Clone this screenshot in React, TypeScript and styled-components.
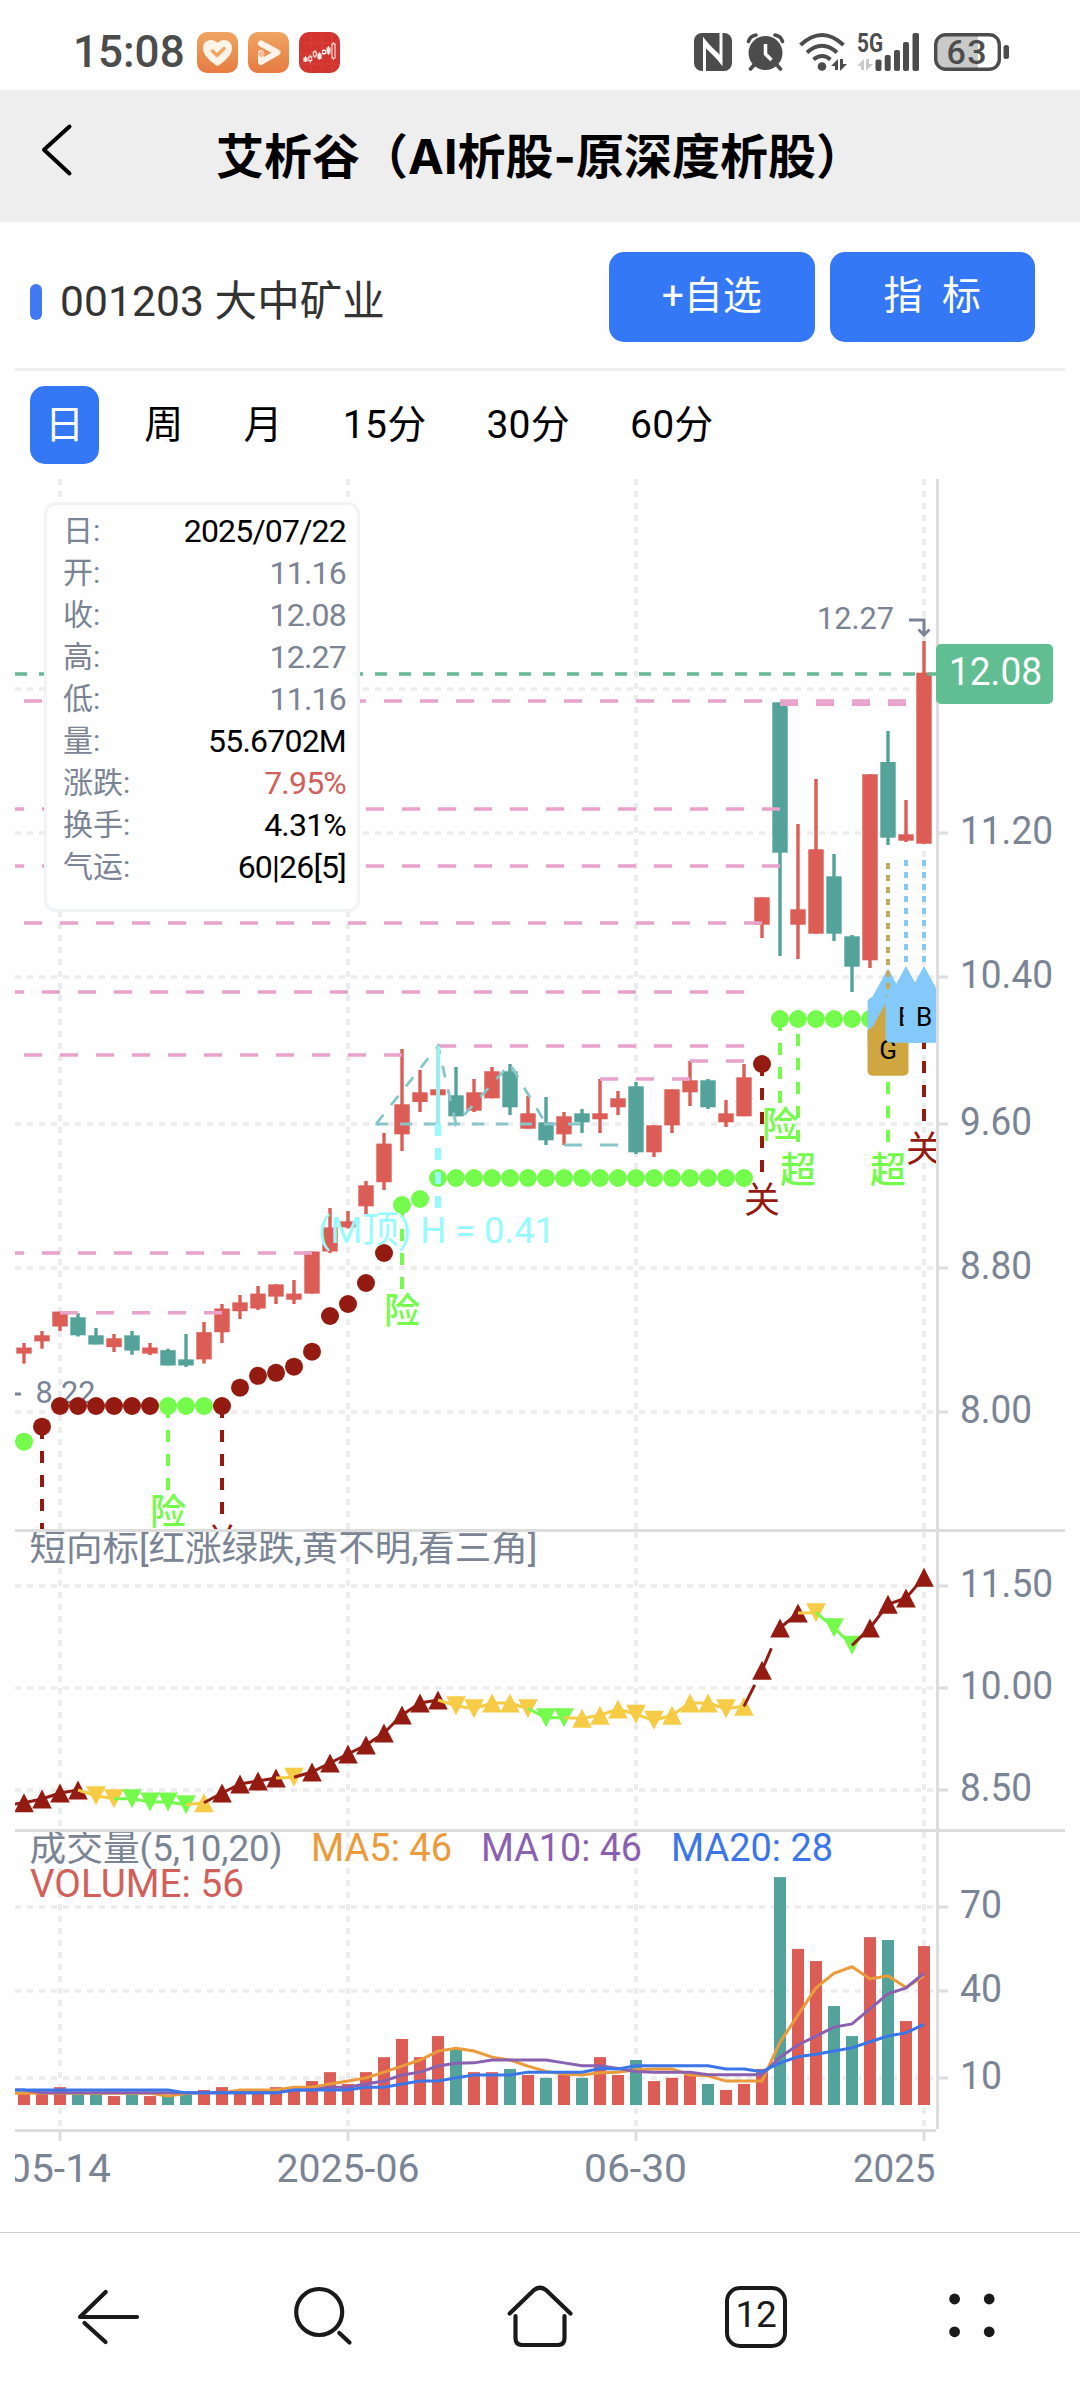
import React from "react";
import styled, { createGlobalStyle } from "styled-components";

const SANS = `Roboto, "Noto Sans CJK SC", sans-serif`;
const RED = "#db5d55";
const TEAL = "#54a39a";
const DEEP = "#931b12";
const LIME = "#75fb4c";
const AMBER = "#f6cc46";
const SLATE = "#7b8494";
const PINK = "#e9a3cb";
const AXIS = "#dddddd";
const GRID = "#ececec";
const BLUE = "#3478f6";

const GlobalStyle = createGlobalStyle`
  * { box-sizing: border-box; }
  body { margin: 0; background: #fefefe; font-family: ${SANS}; }
`;

const Page = styled.div`
  width: 1080px;
  height: 2400px;
  display: flex;
  flex-direction: column;
  background: #fefefe;
  overflow: hidden;
`;

const StatusBar = styled.div`
  height: 90px;
  flex: none;
  padding: 14px 71px 0 73px;
  display: flex;
  justify-content: space-between;
  align-items: center;
  color: #4c4c4c;
`;

const StatusGroup = styled.div<{ $gap: number }>`
  display: flex;
  align-items: center;
  gap: ${(p) => p.$gap}px;
`;

const Clock = styled.span`
  font-size: 44px;
  font-weight: 500;
  line-height: 44px;
  width: 114px;
`;

const Icon = styled.svg`
  display: block;
  flex: none;
  overflow: visible;
`;

const Header = styled.header`
  height: 132px;
  flex: none;
  background: #eeeeee;
  display: grid;
  grid-template-columns: 110px 1fr 110px;
  align-items: center;
`;

const Title = styled.h1`
  margin: 0;
  padding-top: 1px;
  font-family: Inter, "Noto Sans CJK SC", sans-serif;
  font-size: 48px;
  font-weight: 700;
  line-height: 60px;
  text-align: center;
  white-space: nowrap;
  color: #000;
`;

const StockRow = styled.section`
  height: 149px;
  flex: none;
  margin: 0 15px;
  padding: 30px 30px 0 15px;
  border-bottom: 3px solid #eeeeee;
  display: flex;
  align-items: flex-start;
  gap: 15px;
`;

const StockName = styled.div`
  flex: 1;
  display: flex;
  align-items: center;
  gap: 18px;
  height: 90px;
  padding-top: 10px;
  color: #333;
  white-space: pre;
`;

const StockText = styled.span`
  padding-bottom: 1px;
  font-size: 42.5px;
  line-height: 50px;
  letter-spacing: 0.1px;
`;

const Marker = styled.span`
  width: 12px;
  height: 36px;
  border-radius: 6px;
  background: #4378f5;
`;

const ActionButton = styled.button`
  width: 205.5px;
  height: 90px;
  padding: 0 0 10px;
  border: 0;
  border-radius: 15px;
  background: ${BLUE};
  color: #fff;
  font-family: ${SANS};
  font-size: 39px;
  white-space: pre;
`;

const Tabs = styled.nav`
  height: 102px;
  flex: none;
  padding: 15px 30px 0;
  display: flex;
  align-items: flex-start;
  gap: 30px;
`;

const Tab = styled.div<{ $active?: boolean }>`
  height: 78px;
  padding: 0 15px 9px;
  display: flex;
  align-items: center;
  border-radius: 15px;
  font-size: 39px;
  letter-spacing: 0.25px;
  background: ${(p) => (p.$active ? BLUE : "transparent")};
  color: ${(p) => (p.$active ? "#fff" : "#000")};
`;

const ChartArea = styled.section`
  position: relative;
  height: 1759px;
  flex: none;
`;

const ChartSvg = styled.svg`
  display: block;
  font-family: ${SANS};
`;

const Tooltip = styled.dl`
  position: absolute;
  left: 44px;
  top: 29px;
  width: 316px;
  height: 410px;
  margin: 0;
  padding: 5px 11px 0 16px;
  border: 3px solid #f2f3f5;
  border-radius: 12px;
  background: #fefefe;
`;

const TipRow = styled.div`
  height: 42px;
  display: flex;
  align-items: center;
  justify-content: space-between;
`;

const TipLabel = styled.dt`
  font-size: 30px;
  line-height: 42px;
  color: ${SLATE};
`;

const TipValue = styled.dd<{ $color: string }>`
  margin: 0;
  font-size: 32px;
  line-height: 42px;
  letter-spacing: -0.8px;
  color: ${(p) => p.$color};
`;

const NavBar = styled.footer`
  height: 168px;
  flex: none;
  border-top: 1px solid #cccccc;
  display: grid;
  grid-template-columns: repeat(5, 1fr);
  justify-items: center;
  align-items: center;
`;

const TabCount = styled.div`
  width: 62px;
  height: 62px;
  border: 4px solid #1a1a1a;
  border-radius: 15px;
  display: flex;
  align-items: center;
  justify-content: center;
  padding: 0 0 5px;
  font-size: 37px;
  letter-spacing: -0.4px;
  color: #1a1a1a;
`;

/* [body top, body bottom, wick top, wick bottom, rising] */
type Candle = [number, number, number, number, 0 | 1];
const candles: Candle[] = [
  [1347.5, 1353.6, 1343, 1363.6, 1],
  [1335.3, 1341.4, 1331, 1348.7, 1],
  [1311.6, 1326.5, 1311.6, 1331, 1],
  [1317.3, 1335.3, 1313, 1336.5, 0],
  [1335.3, 1344.5, 1328, 1344.5, 0],
  [1338.3, 1347.1, 1334, 1352, 1],
  [1335.3, 1350.6, 1331, 1354.8, 0],
  [1347.5, 1353.6, 1343, 1355, 1],
  [1350.2, 1365.5, 1348.7, 1365.5, 0],
  [1359.4, 1365.5, 1334, 1367, 0],
  [1332.2, 1359.4, 1322, 1363.6, 1],
  [1308.5, 1332.2, 1304, 1343, 1],
  [1302.4, 1311.2, 1295, 1319, 1],
  [1293.6, 1308.5, 1286, 1310, 1],
  [1284.4, 1296.6, 1284.4, 1304, 1],
  [1293.6, 1299.7, 1280, 1304, 1],
  [1251.5, 1293.6, 1251.5, 1293.6, 1],
  [1227.4, 1251.5, 1208, 1253, 1],
  [1221.3, 1227.4, 1211, 1228.5, 1],
  [1185.3, 1206.3, 1181, 1214, 1],
  [1143.6, 1182.2, 1133, 1190, 1],
  [1104.3, 1134.3, 1049, 1151, 1],
  [1092.3, 1102, 1070, 1112, 1],
  [1089.3, 1095.3, 1046, 1095.3, 1],
  [1095.3, 1116.3, 1067, 1116.3, 0],
  [1092.3, 1110.7, 1079, 1112, 1],
  [1071.3, 1098.3, 1067, 1098.3, 1],
  [1071.3, 1107.3, 1064, 1115, 0],
  [1113.3, 1128.7, 1096, 1128.7, 1],
  [1122.3, 1140.3, 1097, 1145, 0],
  [1116.3, 1134.3, 1112, 1145, 1],
  [1113.3, 1122.3, 1109, 1133, 0],
  [1113.3, 1119.3, 1079, 1133, 1],
  [1098.3, 1107.3, 1091, 1115, 1],
  [1086.3, 1152.3, 1082, 1154, 0],
  [1125.3, 1152.3, 1125.3, 1157, 1],
  [1089.3, 1125.3, 1089.3, 1133, 1],
  [1080.3, 1092.3, 1061, 1106, 1],
  [1080.3, 1107.3, 1079, 1109, 0],
  [1113.3, 1122.3, 1100, 1127, 1],
  [1077.3, 1116.3, 1064, 1116.3, 1],
  [897.3, 924.7, 897.3, 938, 1],
  [702.3, 852.7, 702.3, 956, 0],
  [909.3, 924.7, 824, 959, 1],
  [849.3, 933.7, 779, 933.7, 1],
  [876.3, 933.7, 854, 941, 0],
  [936.3, 966.7, 935, 992, 0],
  [774.3, 960.3, 774.3, 968, 1],
  [762, 837.7, 731, 845, 0],
  [834.3, 840.7, 800, 842, 1],
  [672.7, 843.7, 641, 843.7, 1],
];

const xAt = (i: number) => 24 + 18 * i;
const fill = (n: number, v: number) => Array<number>(n).fill(v);

const sarY = [
  1441.7, 1426.7, ...fill(10, 1406), 1387.7, 1375.8, 1372.8, 1366.7, 1351.7, 1316, 1304, 1283, 1253,
  1205, 1199, ...fill(18, 1178), 1064, ...fill(8, 1019), 1013,
];
const sarRed = new Set([1, 2, 3, 4, 5, 6, 7, 11, 12, 13, 14, 15, 16, 17, 18, 19, 20, 41, 50]);

/* u = up, d = down; r/y/g = red, yellow, green */
const trend: [number, string][] = [
  [1802.7, "ur"], [1799, "ur"], [1793, "ur"], [1790, "ur"], [1795.7, "dy"], [1798.7, "dy"],
  [1798.7, "dg"], [1802, "dg"], [1802, "dg"], [1804.7, "dg"], [1802.7, "uy"], [1793, "ur"],
  [1784, "ur"], [1781, "ur"], [1778, "ur"], [1777.3, "dy"], [1772, "ur"], [1763, "ur"],
  [1754, "ur"], [1745, "ur"], [1733, "ur"], [1715, "ur"], [1703, "ur"], [1700, "ur"],
  [1705.7, "dy"], [1708.7, "dy"], [1703, "uy"], [1703, "uy"], [1708.7, "dy"], [1717.7, "dg"],
  [1717.7, "dg"], [1718.3, "uy"], [1715.3, "uy"], [1709, "uy"], [1714.3, "dy"], [1720.3, "dy"],
  [1715.3, "uy"], [1703, "uy"], [1703, "uy"], [1708.7, "dy"], [1706.3, "uy"], [1670.3, "ur"],
  [1628, "ur"], [1613, "ur"], [1612.7, "dy"], [1627.7, "dg"], [1645.3, "dg"], [1628, "ur"],
  [1604.3, "ur"], [1598, "ur"], [1577.3, "ur"],
];
const trendColor: Record<string, string> = { r: DEEP, y: AMBER, g: LIME };

/* Volume panel values, in units of 1/2.8 px below y = 1840 */
const volY = (v: number) => 1840 + v / 2.8;
const volumes = [
  708, 708, 692, 712, 712, 717, 712, 717, 717, 712, 700, 692, 708, 708, 692, 700, 675, 650, 683,
  650, 608, 557, 608, 549, 587, 650, 650, 641, 658, 666, 658, 666, 608, 658, 616, 675, 666, 658,
  683, 700, 683, 641, 104, 305, 339, 465, 549, 272, 280, 507, 297,
];
const ma5 = [
  ...fill(8, 709), 717, 710, 708, 708, 700, 700, 700, 692, 692, 683, 675, 666, 650, 633, 616, 591,
  583, 591, 608, 616, 633, 648, 655, 658, 652, 650, 643, 641, 641, 658, 660, 675, 675, 675, 566,
  490, 414, 373, 355, 389, 380, 413, 381,
];
const ma10 = [
  700, ...fill(14, 708), 700, 700, 692, 692, 683, 675, 658, 650, 633, 625, 624, 616, 616, 616, 616,
  624, 632, 632, 640, 648, 650, 650, 650, 657, 657, 657, 657, 608, 574, 549, 524, 515, 473, 431,
  414, 373,
];
const ma20 = [
  ...fill(9, 700), ...fill(6, 708), 700, 700, 700, 700, 692, 692, 683, 675, 675, 666, 658, 658, 658,
  650, 650, 650, 650, 640, 641, 632, 632, 632, 632, 632, 641, 641, 649, 624, 607, 600, 591, 582,
  565, 549, 540, 516,
];
const averages: [number[], string][] = [
  [ma5, "#ec9b3b"],
  [ma10, "#8a60b0"],
  [ma20, "#3a76e8"],
];

/* Resistance levels: [y, x start, x end] */
const levels = [
  [701, 24, 906], [704.3, 780, 906], [809, 6, 780], [866, 6, 780], [923, 24, 762], [992, 6, 744],
  [1055, 24, 402], [1046, 438, 744], [1061, 690, 744], [1079, 600, 690], [1253, 6, 312],
  [1312.7, 60, 222],
];

const priceTicks: [number, string][] = [
  [833, "11.20"], [977, "10.40"], [1124, "9.60"], [1268, "8.80"], [1412, "8.00"],
];
const trendTicks: [number, string][] = [[1586, "11.50"], [1688, "10.00"], [1790, "8.50"]];
const volTicks: [number, string][] = [[1907, "70"], [1991, "40"], [2078, "10"]];
const allTicks = [...priceTicks, ...trendTicks, ...volTicks];
const dateXs = [60, 348, 636, 924];

/* Signal marks: [x, line start, line length, label, colour] */
const signals: [number, number, number, string, string][] = [
  [42, 1427, 108, "", DEEP],
  [168, 1406, 84, "险", LIME],
  [222, 1406, 108, "关", DEEP],
  [402, 1205, 84, "险", LIME],
  [762, 1064, 108, "关", DEEP],
  [780, 1019, 84, "险", LIME],
  [798, 1010, 132, "超", LIME],
  [888, 1010, 132, "超", LIME],
  [924, 1013, 108, "关", DEEP],
];

const tips: [string, string, string][] = [
  ["日:", "2025/07/22", "#000"],
  ["开:", "11.16", SLATE],
  ["收:", "12.08", SLATE],
  ["高:", "12.27", SLATE],
  ["低:", "11.16", SLATE],
  ["量:", "55.6702M", "#000"],
  ["涨跌:", "7.95%", "#d0605a"],
  ["换手:", "4.31%", "#000"],
  ["气运:", "60|26[5]", "#000"],
];

interface LabelProps {
  x: number;
  y: number;
  w?: number;
  size?: number;
  weight?: number;
  color?: string;
  anchor?: "start" | "middle" | "end";
  children: string;
}
const Label = ({ x, y, w, size = 38, weight = 400, color = SLATE, anchor = "start", children }: LabelProps) => (
  <text
    x={x}
    y={y}
    fontSize={size}
    fontWeight={weight}
    fill={color}
    textAnchor={anchor}
    textLength={w}
    lengthAdjust={w ? "spacingAndGlyphs" : undefined}
  >
    {children}
  </text>
);

const Flag = ({ x, y, color, text }: { x: number; y: number; color: string; text: string }) => (
  <g>
    <path d={`M${x} ${y}L${x + 17} ${y + 31}H${x - 17}Z`} fill={color} />
    <rect x={x - 20.5} y={y + 28.7} width={41} height={48} rx={5} fill={color} />
    <Label x={x} y={y + 59.5} size={26} color="#000" anchor="middle">
      {text}
    </Label>
  </g>
);

const PriceFlags = () => (
  <g>
    <Flag x={888} y={968.5} color="#83c9f9" text="" />
    <path d="M888 863V997" stroke="#c3aa5c" strokeWidth={4} strokeDasharray="6 6" />
    <path d="M906 860V966M924 860V966" stroke="#86caf3" strokeWidth={4} strokeDasharray="6 6" />
    <Flag x={888} y={999} color="#cfa640" text="G" />
    <Flag x={906} y={966} color="#83c9f9" text="B" />
    <Flag x={924} y={966} color="#83c9f9" text="B" />
  </g>
);

const Grid = () => (
  <g stroke={GRID} strokeWidth={3.4} strokeDasharray="6 6" fill="none">
    {[689, ...allTicks.map((t) => t[0])].map((y) => (
      <path key={y} d={`M15 ${y}H936`} />
    ))}
    {dateXs.map((x) => (
      <path key={x} strokeWidth={4} d={`M${x} 479V1529M${x} 1532V1829M${x} 1832V2129`} />
    ))}
  </g>
);

const PricePanel = () => (
  <g clipPath="url(#pricePanel)">
    <Label x={35.5} y={1403} w={60} size={31}>8.22</Label>
    <path d="M15 1394H21" stroke={SLATE} strokeWidth={3} />
    {candles.map(([top, bottom, high, low, up], i) => (
      <g key={i} fill={up ? RED : TEAL}>
        <rect x={xAt(i) - 1.7} y={high} width={3.4} height={low - high} />
        <rect x={xAt(i) - 7.7} y={top} width={15.4} height={bottom - top} />
      </g>
    ))}
    <path d="M15 674H936" stroke="#65b891" strokeWidth={3.4} strokeDasharray="12 12" />
    {levels.map(([y, from, to]) => (
      <path key={y} d={`M${from} ${y}H${to}`} stroke={PINK} strokeWidth={3.4} strokeDasharray="18 18" />
    ))}
    {sarY.map((y, i) => (
      <circle key={i} cx={xAt(i)} cy={y} r={9} fill={sarRed.has(i) ? DEEP : LIME} />
    ))}
    <g fill="none" stroke="#88c6ca" strokeWidth={3.2}>
      <path d="M376 1124L438 1046L456 1124L510 1064L546 1124" strokeWidth={2.8} strokeDasharray="12 12" />
      <path d="M376 1124H582" strokeDasharray="12 12" />
      <path d="M564 1145H618" strokeDasharray="18 18" />
    </g>
    <path d="M438 1046V1124" stroke="#9aefee" strokeWidth={4} />
    <path d="M438 1124V1208" stroke="#97fbfd" strokeWidth={6} strokeDasharray="12 12" />
    {signals.map(([x, y, len, text, color]) => (
      <g key={x}>
        <path d={`M${x} ${y}V${y + len}`} stroke={color} strokeWidth={4} strokeDasharray="12 12" />
        <Label
          x={x}
          y={y + len + (text === "险" ? 35 : 41)}
          size={36}
          weight={color === LIME ? 500 : 400}
          color={color}
          anchor="middle"
        >
          {text}
        </Label>
      </g>
    ))}
    <Label x={318} y={1243} w={237} size={37} color="#97fbfd">(M顶) H = 0.41</Label>
    <PriceFlags />
    <Label x={817} y={629} w={77} size={32}>12.27</Label>
    <path d="M909 620H924V634M918.5 629.5L924 635L929.5 629.5" fill="none" stroke={SLATE} strokeWidth={3} />
  </g>
);

const TrendPanel = () => (
  <g clipPath="url(#trendPanel)">
    <path d="M15 1804L24 1802.7" stroke={DEEP} strokeWidth={3} />
    {trend.map(([y, kind], i) => {
      const x = xAt(i);
      const s = kind[0] === "u" ? 9.5 : -9.5;
      const color = trendColor[kind[1]];
      return (
        <g key={i}>
          <path d={`M${x} ${y - s}L${x + 9.8} ${y + s}H${x - 9.8}Z`} fill={color} />
          {i > 0 && (
            <path
              d={`M${xAt(i - 1)} ${trend[i - 1][0]}L${x} ${y}`}
              stroke={color}
              strokeWidth={3}
              strokeDasharray="24 24"
            />
          )}
        </g>
      );
    })}
    <Label x={29.5} y={1561} w={508} size={36}>短向标[红涨绿跌,黄不明,看三角]</Label>
  </g>
);

const VolumePanel = () => (
  <g>
    {volumes.map((v, i) => (
      <rect
        key={i}
        x={xAt(i) - 6}
        y={volY(v)}
        width={12}
        height={2105 - volY(v)}
        fill={candles[i][4] ? RED : TEAL}
      />
    ))}
    {averages.map(([values, color]) => (
      <polyline
        key={color}
        points={`15,${volY(values[0])} ${values.map((v, i) => `${xAt(i)},${volY(v)}`).join(" ")}`}
        fill="none"
        stroke={color}
        strokeWidth={3}
      />
    ))}
    <Label x={29.5} y={1861} w={253} size={36}>成交量(5,10,20)</Label>
    <Label x={311} y={1861} w={141} color="#ec9b3b">MA5: 46</Label>
    <Label x={481} y={1861} w={161} color="#8a60b0">MA10: 46</Label>
    <Label x={671} y={1861} w={162} color="#3a76e8">MA20: 28</Label>
    <Label x={30} y={1897} w={214} color="#d2605a">VOLUME: 56</Label>
  </g>
);

const Axes = () => (
  <g>
    <g stroke={AXIS} strokeWidth={3} fill="none">
      <path d="M15 1530.5H1065M15 1830.5H1065M15 2130.5H936M937.5 479V2129" />
      {allTicks.map(([y]) => (
        <path key={y} d={`M939 ${y}H948`} />
      ))}
      {dateXs.map((x) => (
        <path key={x} d={`M${x} 2132V2141`} />
      ))}
    </g>
    {allTicks.map(([y, text]) => (
      <Label key={y} x={960} y={y + 11} w={text.length === 5 ? 93 : text.length === 4 ? 72 : 42}>
        {text}
      </Label>
    ))}
    <g clipPath="url(#dateAxis)">
      <Label x={8} y={2182} w={103}>05-14</Label>
      <Label x={276.5} y={2182} w={143}>2025-06</Label>
      <Label x={584} y={2182} w={103}>06-30</Label>
      <Label x={853} y={2182} w={82.5}>2025</Label>
    </g>
    <rect x={936} y={644} width={117} height={60} rx={5} fill="#61bd92" />
    <Label x={949} y={685} w={93} color="#fff">12.08</Label>
  </g>
);

const Chart = () => (
  <ChartSvg width={1080} height={1759} viewBox="0 473 1080 1759">
    <defs>
      <clipPath id="pricePanel"><rect x={15} y={473} width={921} height={1056} /></clipPath>
      <clipPath id="trendPanel"><rect x={15} y={1532} width={921} height={297} /></clipPath>
      <clipPath id="dateAxis"><rect x={15} y={2132} width={921} height={80} /></clipPath>
    </defs>
    <Grid />
    <PricePanel />
    <TrendPanel />
    <VolumePanel />
    <Axes />
  </ChartSvg>
);

const AppBadges = () => (
  <>
    <Icon width={41} height={41} viewBox="0 0 41 41">
      <defs>
        <linearGradient id="orange" x1="0" y1="0" x2="0" y2="1">
          <stop offset="0" stopColor="#f0a562" />
          <stop offset="1" stopColor="#e67b42" />
        </linearGradient>
      </defs>
      <rect width={41} height={41} rx={10} fill="url(#orange)" />
      <path d="M20.5 34C14 30 6 23.500 6 16C6 7.500 16 5.500 20.500 11C25 5.500 35 7.500 35 16C35 23.500 27 30 20.500 34Z" fill="#fff4e8" />
      <path d="M15.500 19L20 23.500L27 16.500" fill="none" stroke="#f0a562" strokeWidth={3.500} strokeLinecap="round" strokeLinejoin="round" />
    </Icon>
    <Icon width={41} height={41} viewBox="0 0 41 41">
      <rect width={41} height={41} rx={10} fill="url(#orange)" />
      <path d="M13 11.500L29.500 20.500L13 30V21" fill="none" stroke="#fff3ea" strokeWidth={6} strokeLinecap="round" strokeLinejoin="round" />
      <circle cx={13.500} cy={22} r={3} fill="#f6bd90" />
    </Icon>
    <Icon width={41} height={41} viewBox="0 0 41 41">
      <rect width={41} height={41} rx={10} fill="#d2352f" />
      <path d="M0 11H41M0 22H41M0 32H41M12 0V41M23 0V41M33 0V41" stroke="#dc4a43" strokeWidth={0.6} />
      <g fill="none" stroke="#ffe9e6" strokeWidth={1.1}>
        <rect x={5} y={26} width={3} height={3} fill="#ffe9e6" />
        <path d="M6.500 24V30M11.200 23V31M15.800 18V26M20.500 20V28M25 17V23M29.500 14V23M34.500 10V28" />
        <rect x={9.700} y={25} width={3} height={3.500} fill="#d2352f" />
        <rect x={14.300} y={20} width={3} height={4} fill="#d2352f" />
        <rect x={19} y={22} width={3} height={4.500} fill="#ffe9e6" />
        <rect x={23.500} y={18.500} width={3} height={3} fill="#d2352f" />
        <rect x={28} y={16} width={3} height={5} fill="#ffe9e6" />
        <rect x={33} y={12} width={3} height={14} fill="#d2352f" />
      </g>
    </Icon>
  </>
);

const StatusIcons = () => (
  <>
    <Icon width={38} height={38} viewBox="0 0 38 38">
      <rect width={38} height={38} rx={8} fill="#4c4c4c" />
      <path d="M10.500 38V8L27 29V0" fill="none" stroke="#fefefe" strokeWidth={3} />
      <path d="M10.500 7L27 23V30L10.500 14Z" fill="#fefefe" />
    </Icon>
    <Icon width={37} height={38} viewBox="0 0 37 38">
      <circle cx={18.500} cy={20} r={17} fill="#4c4c4c" />
      <path d="M7 32L3.500 36M30 32L33.500 36M1.500 8.500Q3 3 9 2M35.500 8.500Q34 3 28 2" fill="none" stroke="#4c4c4c" strokeWidth={3.600} strokeLinecap="round" />
      <path d="M18.500 11V21L24.500 27" fill="none" stroke="#fefefe" strokeWidth={3.500} />
    </Icon>
    <Icon width={43} height={38} viewBox="0 0 43 38">
      <g fill="none" stroke="#4c4c4c" strokeWidth={4}>
        <path d="M1.500 12Q23 -8 44.500 12" />
        <path d="M8 19.500Q23 6 38 19.500" />
        <path d="M14.500 26.500Q23 19.500 31.500 26.500" />
      </g>
      <circle cx={23} cy={33.500} r={4.300} fill="#4c4c4c" />
      <path d="M39 37V26L32 33H36V37ZM41 26V38L48 31H44V26Z" fill="#4c4c4c" />
    </Icon>
    <Icon width={62} height={38} viewBox="0 0 62 38">
      <text x={0} y={18.500} fontFamily={SANS} fontSize={25} fontWeight={700} fill="#4c4c4c" textLength={26} lengthAdjust="spacingAndGlyphs">5G</text>
      <path d="M7 37V26L0 33H4V37ZM9 26V38L16 31H12V26Z" fill="#c9c9c9" />
      <g fill="#4c4c4c">
        <rect x={18.500} y={26.500} width={6} height={11.500} rx={2} />
        <rect x={27.700} y={22} width={6} height={16} rx={2} />
        <rect x={37} y={17} width={6} height={21} rx={2} />
        <rect x={46} y={9} width={6} height={29} rx={2} />
        <rect x={55.500} y={0} width={6.500} height={38} rx={2} />
      </g>
    </Icon>
    <Icon width={75} height={38} viewBox="0 0 75 38">
      <path d="M12 2H44V36H12Q2 36 2 26V12Q2 2 12 2Z" fill="#c9c9c9" />
      <rect x={1.700} y={1.700} width={63.600} height={34.600} rx={10} fill="none" stroke="#4c4c4c" strokeWidth={3.400} />
      <rect x={69.500} y={12} width={5.500} height={14} rx={2.500} fill="#4c4c4c" />
      <text x={12.500} y={31} fontFamily={SANS} fontSize={34} fontWeight={500} fill="#4c4c4c" textLength={40}>63</text>
    </Icon>
  </>
);

const strokeProps = {
  fill: "none",
  stroke: "#1a1a1a",
  strokeWidth: 4.2,
  strokeLinecap: "round" as const,
  strokeLinejoin: "round" as const,
};

export default function App() {
  return (
    <Page>
      <GlobalStyle />
      <StatusBar>
        <StatusGroup $gap={10}>
          <Clock>15:08</Clock>
          <AppBadges />
        </StatusGroup>
        <StatusGroup $gap={15}>
          <StatusIcons />
        </StatusGroup>
      </StatusBar>
      <Header>
        <Icon width={110} height={132} viewBox="0 90 110 132">
          <path d="M69.500 126.500L44 149.700L69.500 173.500" fill="none" stroke="#000" strokeWidth={4} strokeLinecap="round" strokeLinejoin="round" />
        </Icon>
        <Title>艾析谷（AI析股-原深度析股）</Title>
      </Header>
      <StockRow>
        <StockName>
          <Marker />
          <StockText>001203 大中矿业</StockText>
        </StockName>
        <ActionButton>+自选</ActionButton>
        <ActionButton>{"指\u00a0\u00a0标"}</ActionButton>
      </StockRow>
      <Tabs>
        <Tab $active>日</Tab>
        {["周", "月", "15分", "30分", "60分"].map((t) => (
          <Tab key={t}>{t}</Tab>
        ))}
      </Tabs>
      <ChartArea>
        <Chart />
        <Tooltip>
          {tips.map(([label, value, color]) => (
            <TipRow key={label}>
              <TipLabel>{label}</TipLabel>
              <TipValue $color={color}>{value}</TipValue>
            </TipRow>
          ))}
        </Tooltip>
      </ChartArea>
      <NavBar>
        <Icon width={64} height={64} viewBox="76 2285 64 64">
          <path {...strokeProps} d="M137 2317H80L105.700 2292" />
          <path {...strokeProps} d="M84.500 2323L105.500 2342" />
        </Icon>
        <Icon width={64} height={64} viewBox="292 2285 64 64">
          <circle {...strokeProps} cx={319.200} cy={2312} r={23} />
          <path {...strokeProps} d="M339.300 2333L349.500 2342.500" />
        </Icon>
        <Icon width={64} height={64} viewBox="508 2285 64 64">
          <path {...strokeProps} d="M509.700 2313.500L534 2290Q540 2285.500 546 2290L570.500 2313.500" />
          <path {...strokeProps} d="M515.500 2316V2338Q515.500 2345 522 2345H558Q564.500 2345 564.500 2338V2316" />
        </Icon>
        <TabCount>12</TabCount>
        <Icon width={64} height={64} viewBox="940 2285 64 64" fill="#1a1a1a">
          <circle cx={954.600} cy={2299} r={5.400} />
          <circle cx={989.200} cy={2299} r={5.400} />
          <circle cx={954.600} cy={2331.800} r={5.400} />
          <circle cx={989.200} cy={2331.800} r={5.400} />
        </Icon>
      </NavBar>
    </Page>
  );
}
